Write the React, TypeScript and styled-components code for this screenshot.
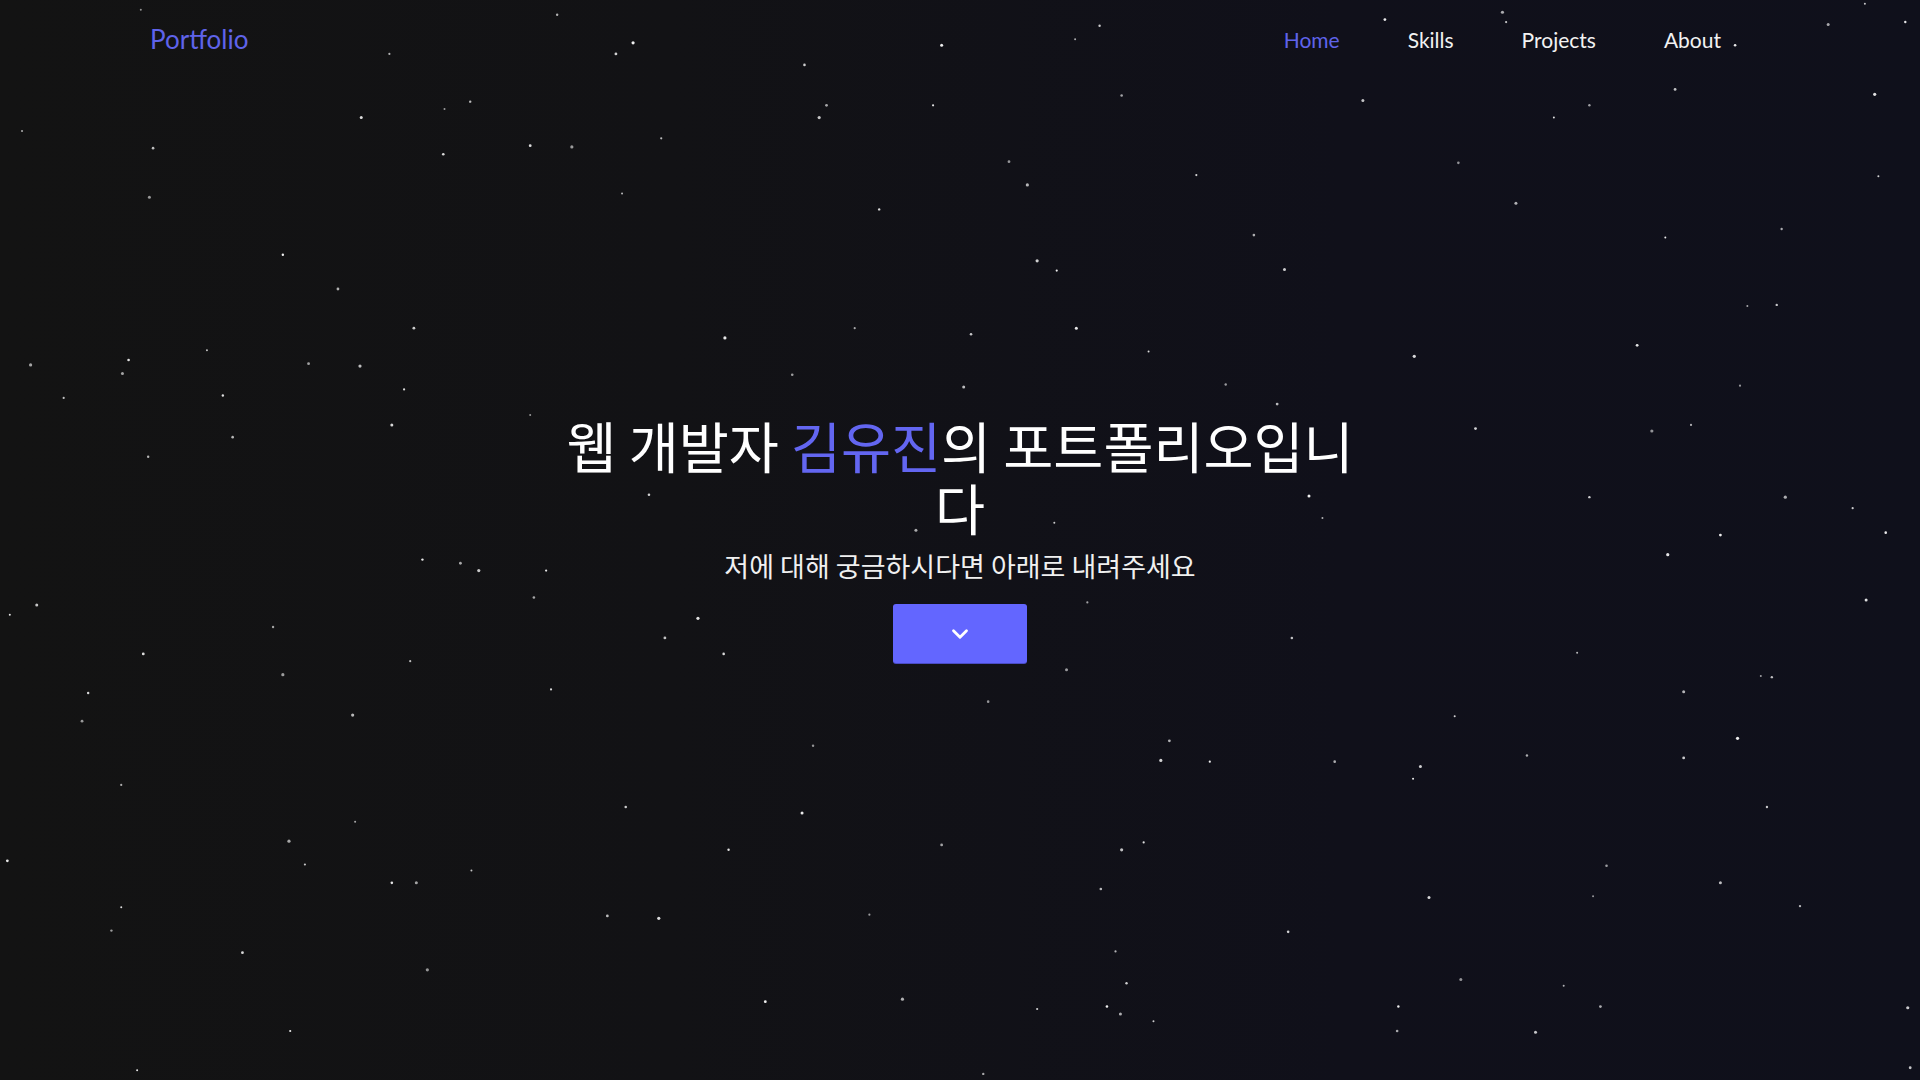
import React from "react";
import styled, { createGlobalStyle } from "styled-components";
import { ChevronDown } from "lucide-react";

const GlobalStyle = createGlobalStyle`
  * { box-sizing: border-box; }
  html, body { margin: 0; padding: 0; }
  body {
    background: #111114;
    font-family: "Lato", "Noto Sans CJK KR", sans-serif;
  }
`;

const S = 1920 / 1568;

const starData: [number, number][] = [
  [115, 8], [455, 12], [503, 44], [517, 35], [318, 44], [657, 53], [769, 37], [878, 32], [898, 21], [1131, 16],
  [1227, 10], [1230, 18], [1417, 37], [1493, 20], [1523, 3], [1556, 18],
  [675, 86], [669, 96], [762, 86], [916, 78], [1113, 82], [1269, 96], [1298, 86], [1368, 73], [1531, 77],
  [18, 107], [125, 121], [295, 96], [363, 89], [384, 83], [433, 119], [467, 120], [540, 113], [362, 126],
  [122, 161], [508, 158], [718, 171], [824, 132], [839, 151], [977, 143], [1191, 133], [1238, 166], [1534, 144],
  [231, 208], [276, 236], [847, 213], [863, 221], [1024, 192], [1049, 220], [1360, 194], [1455, 187],
  [338, 268], [592, 276], [698, 268], [793, 273], [879, 268], [1427, 250], [1451, 249], [1337, 282],
  [25, 298], [52, 325], [105, 294], [100, 305], [169, 286], [182, 323], [252, 297], [294, 299], [330, 318],
  [647, 306], [787, 316], [938, 287], [1001, 314], [1043, 330], [1155, 291], [1421, 315],
  [190, 357], [320, 347], [433, 339], [121, 373], [1205, 350], [1349, 352], [1381, 347],
  [530, 404], [1069, 405], [1080, 423], [1298, 406], [1405, 437], [1458, 406], [1513, 415], [1540, 435], [748, 433], [861, 427],
  [345, 457], [376, 460], [391, 466], [446, 466], [436, 488], [30, 494], [8, 502], [223, 512], [543, 521], [570, 505],
  [888, 492], [1055, 521], [1524, 490], [1438, 552], [1447, 553],
  [117, 534], [231, 551], [335, 540], [591, 534], [871, 547], [1288, 533],
  [72, 566], [67, 589], [288, 584], [450, 563], [807, 573], [1375, 565], [1188, 585],
  [664, 609], [955, 605], [948, 621], [988, 622], [1090, 622], [1160, 626], [1154, 636], [1247, 617], [1375, 619], [1419, 603], [99, 641],
  [511, 659], [655, 664], [290, 671], [1443, 659],
  [6, 703], [236, 687], [249, 706], [320, 721], [340, 721], [385, 711], [595, 694], [769, 690], [916, 694], [934, 688], [1312, 707], [1405, 721],
  [99, 741], [91, 760], [496, 748], [538, 750], [710, 747], [899, 726], [1167, 733], [1301, 732], [1470, 740],
  [198, 778], [349, 792], [911, 777], [1052, 761], [1193, 800], [1277, 805], [920, 803],
  [625, 818], [737, 816], [847, 824], [904, 822], [915, 828], [942, 834], [1142, 822], [1307, 822], [1558, 823],
  [237, 842], [1141, 842], [1254, 843], [112, 874], [803, 877], [1560, 872], [1362, 453],
];

const stars = starData.map(([x, y], i) => ({
  x: x * S,
  y: y * S,
  r: 1 + ((i * 37) % 7) / 10,
  o: 0.55 + ((i * 53) % 40) / 100,
}));

const Page = styled.div`
  position: relative;
  min-height: 100vh;
  display: flex;
  flex-direction: column;
  overflow: hidden;
  background: linear-gradient(90deg, #131313 0%, #121215 35%, #10101a 70%, #0f101b 100%);
  color: #ffffff;
`;

const StarField = styled.svg`
  position: absolute;
  inset: 0;
  width: 100%;
  height: 100%;
  pointer-events: none;
`;

const Header = styled.header`
  position: relative;
  height: 80px;
  display: flex;
  align-items: center;
  justify-content: space-between;
  padding: 0 199px 2px 150px;
`;

const Logo = styled.a`
  font-family: "Lato", sans-serif;
  font-size: 26px;
  color: #5f63ea;
  text-decoration: none;
`;

const NavList = styled.nav`
  display: flex;
  align-items: center;
  gap: 68px;
`;

const NavLink = styled.a<{ $active?: boolean }>`
  font-family: "Lato", sans-serif;
  font-size: 21px;
  font-weight: 400;
  color: ${(p) => (p.$active ? "#5f63ea" : "#f2f2f2")};
  text-decoration: none;
`;

const Hero = styled.main`
  position: relative;
  flex: 1;
  display: flex;
  flex-direction: column;
  align-items: center;
  justify-content: center;
  padding-bottom: 83px;
  text-align: center;
`;

const Title = styled.h1`
  margin: 0;
  max-width: 800px;
  font-family: "Noto Sans CJK KR", sans-serif;
  font-size: 54.4px;
  font-weight: 400;
  line-height: 62px;
  color: #ffffff;
`;

const Accent = styled.span`
  color: #6366f1;
`;

const Subtitle = styled.p`
  margin: 8px 0 0;
  font-family: "Noto Sans CJK KR", sans-serif;
  font-size: 27px;
  font-weight: 400;
  line-height: 40px;
  color: #f0f0f0;
`;

const ScrollButton = styled.button`
  margin-top: 18px;
  width: 134px;
  height: 59px;
  display: flex;
  align-items: center;
  justify-content: center;
  border: none;
  border-radius: 3px;
  background: #6366ff;
  box-shadow: 0 1px 0 #4a4cc4;
  color: #ffffff;
  cursor: pointer;
  padding: 0;
`;

export default function App() {
  return (
    <>
      <GlobalStyle />
      <Page>
        <StarField>
          {stars.map((s, i) => (
            <circle key={i} cx={s.x} cy={s.y} r={s.r} fill="#ffffff" opacity={s.o} />
          ))}
        </StarField>
        <Header>
          <Logo href="#">Portfolio</Logo>
          <NavList>
            <NavLink href="#" $active>Home</NavLink>
            <NavLink href="#">Skills</NavLink>
            <NavLink href="#">Projects</NavLink>
            <NavLink href="#">About</NavLink>
          </NavList>
        </Header>
        <Hero>
          <Title>
            웹 개발자 <Accent>김유진</Accent>의 포트폴리오입니다
          </Title>
          <Subtitle>저에 대해 궁금하시다면 아래로 내려주세요</Subtitle>
          <ScrollButton aria-label="scroll down">
            <ChevronDown size={26} strokeWidth={2.6} />
          </ScrollButton>
        </Hero>
      </Page>
    </>
  );
}
